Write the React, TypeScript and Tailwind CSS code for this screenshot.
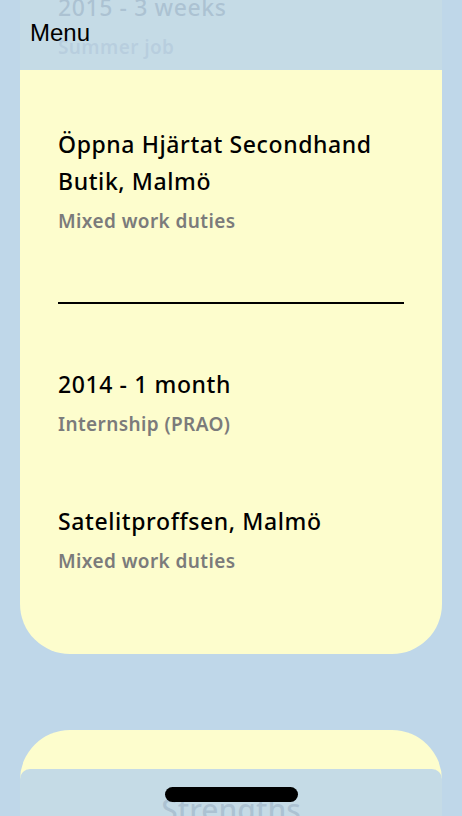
import React from "react";

type Job = {
	period: string;
	role: string;
	place: string;
	duties: string;
};

const jobs: Job[] = [
	{
		period: "2015 - 3 weeks",
		role: "Summer job",
		place: "Öppna Hjärtat Secondhand Butik, Malmö",
		duties: "Mixed work duties",
	},
	{
		period: "2014 - 1 month",
		role: "Internship (PRAO)",
		place: "Satelitproffsen, Malmö",
		duties: "Mixed work duties",
	},
];

const font = { fontFamily: '"Noto Sans", "Open Sans", sans-serif' };

const JobEntry: React.FC<{ job: Job }> = ({ job }) => (
	<div>
		<h3 className="text-[23px] leading-[37px] font-medium tracking-[0.6px] text-black">
			{job.period}
		</h3>
		<p className="mt-[2px] text-[19px] leading-[38px] font-semibold tracking-[0.4px] text-[#7b7b7b]">
			{job.role}
		</p>
		<h3 className="mt-[60px] text-[23px] leading-[37px] font-medium tracking-[0.6px] text-black">
			{job.place}
		</h3>
		<p className="mt-[2px] text-[19px] leading-[38px] font-semibold tracking-[0.4px] text-[#7b7b7b]">
			{job.duties}
		</p>
	</div>
);

const App: React.FC = () => {
	return (
		<div
			className="relative h-[816px] w-full overflow-hidden bg-[#bfd7e9]"
			style={font}
		>
			<div className="px-[20px]">
				<div className="-mt-[73px] rounded-[50px] bg-[#fdfdcd] px-[38px] pt-[62px] pb-[74px]">
					{jobs.map((job, i) => (
						<div key={job.period}>
							{i > 0 && <div className="my-[62px] h-[2px] bg-black" />}
							<JobEntry job={job} />
						</div>
					))}
				</div>

				<div className="mt-[76px] rounded-t-[50px] bg-[#fdfdcd] pt-[60px] pb-[40px]">
					<h2 className="text-center text-[30px] leading-[40px] font-medium text-black">
						Strengths
					</h2>
				</div>
			</div>

			{/* top menu bar */}
			<div className="absolute top-0 left-[20px] right-[20px] h-[70px] bg-[#bfd7e9]/90 pl-[10px] pt-[17px]">
				<span
					className="text-[24px] leading-[32px] text-black"
					style={{ fontFamily: '"Liberation Sans", Arial, sans-serif' }}
				>
					Menu
				</span>
			</div>

			{/* bottom bar */}
			<div className="absolute bottom-0 left-[20px] right-[20px] h-[47px] rounded-t-[10px] bg-[#bfd7e9]/90">
				<div className="mx-auto mt-[18px] h-[15px] w-[133px] rounded-full bg-black" />
			</div>
		</div>
	);
};

export default App;
